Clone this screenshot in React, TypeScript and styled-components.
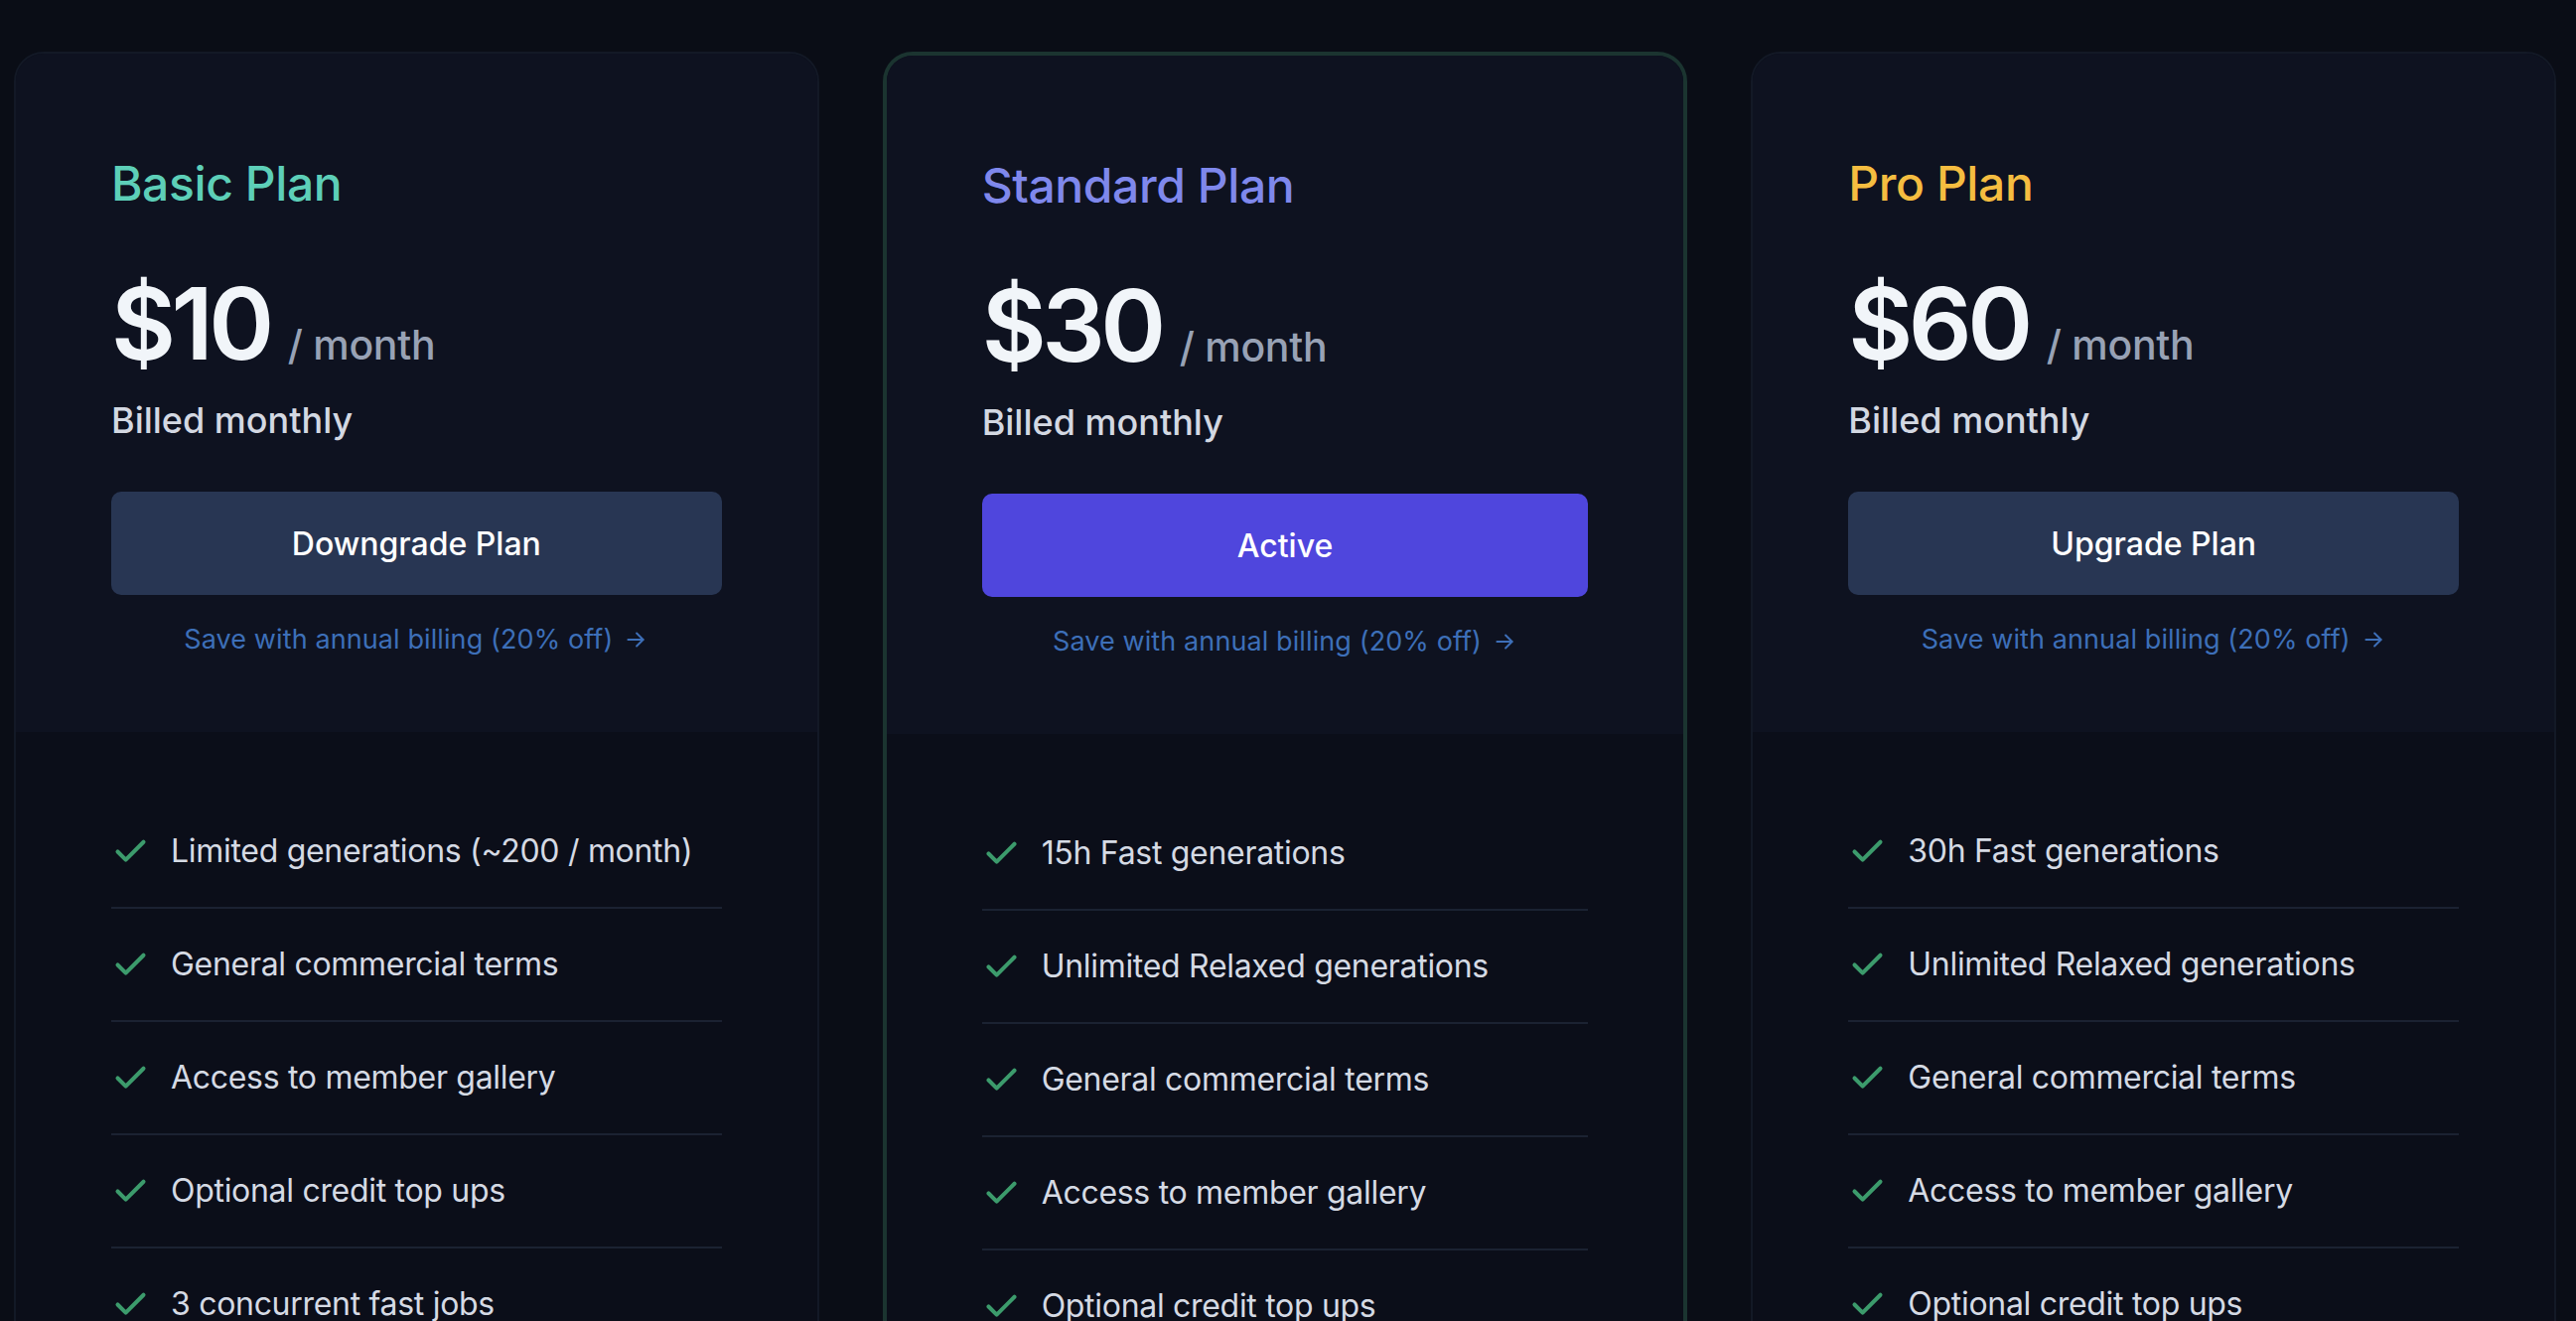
import React from "react";
import styled, { createGlobalStyle } from "styled-components";

const GlobalStyle = createGlobalStyle`
  html, body {
    margin: 0;
    padding: 0;
    background: #0a0d16;
  }
  body {
    font-family: Inter, "Noto Sans", Arial, sans-serif;
    -webkit-font-smoothing: antialiased;
  }
`;

const Page = styled.div`
  display: grid;
  grid-template-columns: repeat(3, 1fr);
  gap: 64px;
  padding: 52px 20px 0 14px;
  min-height: 1330px;
  box-sizing: border-box;
`;

const Card = styled.div<{ $active?: boolean }>`
  display: flex;
  flex-direction: column;
  border-radius: 30px;
  border: ${(p) => (p.$active ? "4px solid #1b3430" : "2px solid #131926")};
  background: #0b0e19;
  overflow: hidden;
`;

const CardHead = styled.div`
  display: flex;
  flex-direction: column;
  padding: 102px 96px 75px 96px;
  background: #0e1220;
`;

const PlanName = styled.h2<{ $color: string }>`
  margin: 0;
  font-size: 48px;
  line-height: 58px;
  font-weight: 500;
  letter-spacing: -0.4px;
  color: ${(p) => p.$color};
`;

const PriceRow = styled.div`
  display: flex;
  align-items: baseline;
  gap: 18px;
  margin-top: 62px;
`;

const Price = styled.span`
  font-size: 100px;
  line-height: 100px;
  font-weight: 600;
  letter-spacing: -4.5px;
  color: #f1f5f9;
`;

const Period = styled.span`
  font-size: 41px;
  line-height: 50px;
  font-weight: 500;
  letter-spacing: -0.3px;
  color: #98a2b5;
`;

const Billing = styled.div`
  margin-top: 25px;
  font-size: 36px;
  line-height: 44px;
  font-weight: 500;
  color: #d3d8e2;
`;

const PlanButton = styled.button<{ $primary?: boolean }>`
  margin-top: 50px;
  height: 104px;
  width: 100%;
  border: none;
  border-radius: 10px;
  background: ${(p) => (p.$primary ? "#4f46dd" : "#283653")};
  color: #ffffff;
  font-family: inherit;
  font-size: 32px;
  font-weight: 500;
  cursor: pointer;
`;

const SaveLink = styled.a`
  margin-top: 27px;
  display: flex;
  align-items: center;
  justify-content: center;
  gap: 10px;
  font-size: 27px;
  line-height: 36px;
  letter-spacing: 0.1px;
  color: #3d6fb8;
  text-decoration: none;
  cursor: pointer;
`;

const Features = styled.ul`
  list-style: none;
  margin: 0;
  padding: 64px 96px 0 96px;
`;

const Feature = styled.li`
  display: flex;
  align-items: center;
  gap: 21px;
  padding: 36px 0;
  border-bottom: 2px solid #1b2232;
  font-size: 32px;
  line-height: 40px;
  letter-spacing: -0.3px;
  color: #d5dae4;
`;

const CheckIcon = () => (
  <svg width="39" height="39" viewBox="0 0 24 24" fill="none" stroke="#3c9b6c" strokeWidth="2.5" strokeLinecap="round" strokeLinejoin="round">
    <path d="M20 6 9 17l-5-5" />
  </svg>
);

const ArrowIcon = () => (
  <svg width="26" height="26" viewBox="0 0 24 24" fill="none" stroke="#3d6fb8" strokeWidth="1.8" strokeLinecap="round" strokeLinejoin="round">
    <path d="M5 12h14" />
    <path d="m13 6 6 6-6 6" />
  </svg>
);

type Plan = {
  name: string;
  color: string;
  price: string;
  action: string;
  active?: boolean;
  features: string[];
};

const plans: Plan[] = [
  {
    name: "Basic Plan",
    color: "#5dcfb8",
    price: "$10",
    action: "Downgrade Plan",
    features: [
      "Limited generations (~200 / month)",
      "General commercial terms",
      "Access to member gallery",
      "Optional credit top ups",
      "3 concurrent fast jobs",
    ],
  },
  {
    name: "Standard Plan",
    color: "#7f88ec",
    price: "$30",
    action: "Active",
    active: true,
    features: [
      "15h Fast generations",
      "Unlimited Relaxed generations",
      "General commercial terms",
      "Access to member gallery",
      "Optional credit top ups",
      "3 concurrent fast jobs",
    ],
  },
  {
    name: "Pro Plan",
    color: "#f5bd40",
    price: "$60",
    action: "Upgrade Plan",
    features: [
      "30h Fast generations",
      "Unlimited Relaxed generations",
      "General commercial terms",
      "Access to member gallery",
      "Optional credit top ups",
      "12 concurrent fast jobs",
      "Stealth image generation",
    ],
  },
];

const App = () => {
  return (
    <>
      <GlobalStyle />
      <Page>
        {plans.map((plan) => (
          <Card key={plan.name} $active={plan.active}>
            {/* price header */}
            <CardHead>
              <PlanName $color={plan.color}>{plan.name}</PlanName>
              <PriceRow>
                <Price>{plan.price}</Price>
                <Period>/ month</Period>
              </PriceRow>
              <Billing>Billed monthly</Billing>
              <PlanButton $primary={plan.active}>{plan.action}</PlanButton>
              <SaveLink>
                Save with annual billing (20% off) <ArrowIcon />
              </SaveLink>
            </CardHead>

            {/* feature list */}
            <Features>
              {plan.features.map((f) => (
                <Feature key={f}>
                  <CheckIcon />
                  {f}
                </Feature>
              ))}
            </Features>
          </Card>
        ))}
      </Page>
    </>
  );
};

export default App;
